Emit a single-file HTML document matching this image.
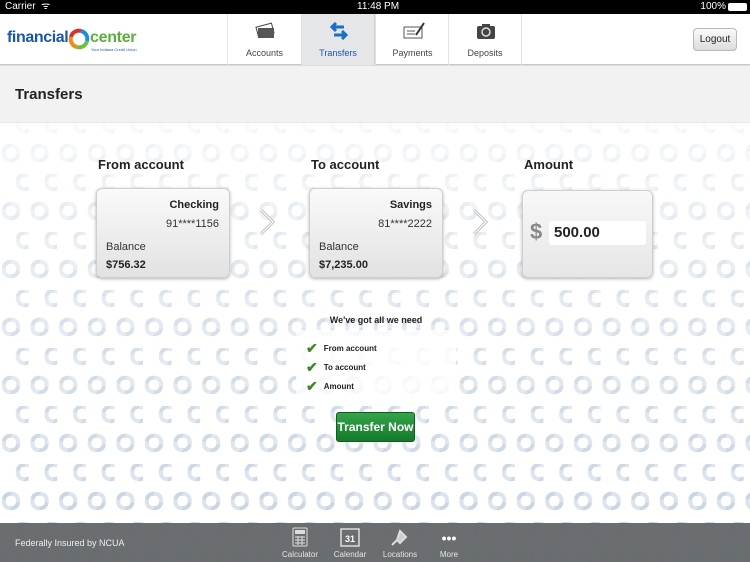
<!DOCTYPE html>
<html><head><meta charset="utf-8"><style>
*{margin:0;padding:0;box-sizing:border-box}
body{width:750px;height:562px;overflow:hidden;font-family:"Liberation Sans",sans-serif;position:relative;background:#fff}
.status{position:absolute;top:0;left:0;width:750px;height:14px;background:#000;color:#fff;font-size:10px;line-height:14px}
.header{position:absolute;top:14px;left:0;width:750px;height:51px;background:#fff;border-bottom:1px solid #c8c8c8;box-shadow:0 1px 2px rgba(0,0,0,.2)}
.tab{position:absolute;top:0;height:51px;width:74px;border-left:1px solid #e2e2e2;text-align:center;font-size:9px;color:#444}
.tab span{position:absolute;bottom:7px;left:0;right:0}
.tab svg{position:absolute;top:8px;left:26px}
.titlebar{position:absolute;top:66px;left:0;width:750px;height:57px;background:#f2f2f2;border-bottom:1px solid #e8e8e8}
.lbl{position:absolute;top:157px;font-size:13px;font-weight:bold;color:#222}
.card{position:absolute;top:188px;width:134px;height:90px;border-radius:6px;border:1px solid #cfcfcf;background:linear-gradient(#fafafa,#e2e2e2);box-shadow:0 1px 3px rgba(0,0,0,.3);overflow:hidden}
.card .a{position:absolute;right:10px;top:10px;font-size:11px;font-weight:bold;color:#222}
.card .n{position:absolute;right:10px;top:29px;font-size:11px;color:#333}
.card .b{position:absolute;left:9px;top:52px;font-size:11px;color:#333}
.card .v{position:absolute;left:9px;top:70px;font-size:11px;font-weight:bold;color:#222}
.footer{position:absolute;top:523px;left:0;width:750px;height:39px;background:rgba(100,104,107,.96);color:#eee}
.fi{position:absolute;top:0;width:50px;text-align:center;font-size:8px;color:#e6e6e6}
.fi span{position:absolute;top:27px;left:0;right:0}
</style></head><body>
<svg style="position:absolute;top:123px;left:0" width="750" height="439">
<defs>
<g id="sw">
<path d="M-9,-1 C-9,-7 -4,-10 2,-9 L1,-5 C-3,-6 -6,-3 -5,1 Z" fill="#c9d5e1"/>
<path d="M9,1 C9,7 4,10 -2,9 L-1,5 C3,6 6,3 5,-1 Z" fill="#c9d5e1"/>
<path d="M-1,9 C-7,9 -10,4 -9,-2 L-5,-1 C-6,3 -3,6 1,5 Z" fill="#dbe3eb"/>
<path d="M1,-9 C7,-9 10,-4 9,2 L5,1 C6,-3 3,-6 -1,-5 Z" fill="#dbe3eb"/>
</g>
<pattern id="p" width="28.6" height="58" patternUnits="userSpaceOnUse" x="0" y="-7">
<use href="#sw" x="25" y="8"/><use href="#sw" x="11" y="37"/>
</pattern>
<linearGradient id="fade" x1="0" y1="0" x2="0" y2="1"><stop offset="0" stop-color="#fff" stop-opacity=".8"/><stop offset=".4" stop-color="#fff" stop-opacity=".3"/><stop offset=".9" stop-color="#fff" stop-opacity="0"/></linearGradient>
</defs>
<rect width="750" height="439" fill="url(#p)"/>
<rect width="750" height="439" fill="url(#fade)"/>
</svg>
<div class="status"><span style="position:absolute;left:5px">Carrier ︎ ᯤ</span><span style="position:absolute;left:357px">11:48 PM</span><span style="position:absolute;right:24px">100%</span><span style="position:absolute;right:3px;top:3px;width:19px;height:8px;border:1px solid #fff;border-radius:2px;background:#fff"></span></div>
<div class="header">
<div style="position:absolute;left:7px;top:15px;font-size:16px;font-weight:bold;color:#1c56a6;letter-spacing:-.4px">financial</div>
<svg style="position:absolute;left:68px;top:13px" width="22" height="24" viewBox="-11 -12 22 24"><g fill="none" stroke-width="4"><path d="M-8,-2 A8,8 0 0 1 2,-8" stroke="#d8312a"/><path d="M2,-8 A8,8 0 0 1 8,2" stroke="#1c8fd6"/><path d="M8,2 A8,8 0 0 1 -2,8" stroke="#6cbf3f"/><path d="M-2,8 A8,8 0 0 1 -8,-2" stroke="#f08a1c"/></g></svg>
<div style="position:absolute;left:90px;top:15px;font-size:16px;font-weight:bold;color:#5aae3c;letter-spacing:-.3px">center</div>
<div style="position:absolute;left:91px;top:33px;font-size:4px;color:#1c56a6">Your Indiana Credit Union</div>
<div class="tab" style="left:227px"><svg width="22" height="18"><rect x="3" y="3" width="16" height="10" fill="#fff" stroke="#444" transform="rotate(-15 11 8)"/><rect x="4" y="6" width="16" height="10" fill="#555"/></svg><span>Accounts</span></div>
<div class="tab" style="left:301px;background:#e4e6e8;color:#1c56a6;border-right:1px solid #d0d0d0"><svg width="22" height="18"><path d="M4,5h12M8,1l-4,4 4,4M18,13H6M14,9l4,4-4,4" stroke="#1c6fc2" stroke-width="3" fill="none"/></svg><span>Transfers</span></div>
<div class="tab" style="left:375px"><svg width="24" height="18"><rect x="2" y="5" width="18" height="11" fill="#fff" stroke="#555"/><path d="M5,9h8M5,12h8" stroke="#555"/><path d="M14,13l8,-12" stroke="#333" stroke-width="2"/></svg><span>Payments</span></div>
<div class="tab" style="left:448px;border-right:1px solid #e2e2e2"><svg width="22" height="18"><rect x="2" y="4" width="18" height="13" rx="2" fill="#444"/><rect x="7" y="2" width="8" height="4" fill="#444"/><circle cx="11" cy="10" r="4" fill="none" stroke="#ddd" stroke-width="1.5"/></svg><span>Deposits</span></div>
<div style="position:absolute;left:693px;top:14px;width:44px;height:23px;border:1px solid #b8b8b8;border-radius:4px;background:linear-gradient(#fafafa,#dcdcdc);font-size:10px;line-height:21px;text-align:center;color:#222">Logout</div>
</div>
<div class="titlebar"><div style="position:absolute;left:15px;top:20px;font-size:15px;font-weight:bold;color:#222">Transfers</div></div>
<div class="lbl" style="left:98px">From account</div>
<div class="lbl" style="left:311px">To account</div>
<div class="lbl" style="left:524px">Amount</div>
<div class="card" style="left:96px"><div class="a">Checking</div><div class="n">91****1156</div><div class="b">Balance</div><div class="v">$756.32</div></div>
<div class="card" style="left:309px"><div class="a">Savings</div><div class="n">81****2222</div><div class="b">Balance</div><div class="v">$7,235.00</div></div>
<svg style="position:absolute;left:258px;top:208px" width="20" height="28"><path d="M3,2l12,12-12,12" fill="none" stroke="#bbb" stroke-width="3"/><path d="M3,2l12,12-12,12" fill="none" stroke="#fff" stroke-width="1.2"/></svg>
<svg style="position:absolute;left:471px;top:208px" width="20" height="28"><path d="M3,2l12,12-12,12" fill="none" stroke="#bbb" stroke-width="3"/><path d="M3,2l12,12-12,12" fill="none" stroke="#fff" stroke-width="1.2"/></svg>
<div class="card" style="left:522px;top:190px;width:131px;height:88px;background:linear-gradient(#f8f8f8,#e6e6e6)">
<div style="position:absolute;left:7px;top:28px;font-size:22px;font-weight:bold;color:#888">$</div>
<div style="position:absolute;left:26px;top:30px;width:97px;height:24px;background:#fff;border-radius:3px;font-size:15px;font-weight:bold;color:#222;line-height:24px;padding-left:5px">500.00</div>
</div>
<div style="position:absolute;left:296px;top:330px;width:160px;height:75px;background:rgba(255,255,255,.8)"></div>
<div style="position:absolute;left:296px;top:315px;width:160px;text-align:center;font-size:9px;font-weight:bold;color:#222">We've got all we need</div>
<div style="position:absolute;left:306px;top:339px;font-size:8px;font-weight:bold;color:#222;line-height:18px">
<div><span style="color:#3d8a25;font-size:14px;vertical-align:-2px;margin-right:6px">✔</span>From account</div>
<div><span style="color:#3d8a25;font-size:14px;vertical-align:-2px;margin-right:6px">✔</span>To account</div>
<div><span style="color:#3d8a25;font-size:14px;vertical-align:-2px;margin-right:6px">✔</span>Amount</div>
</div>
<div style="position:absolute;left:336px;top:412px;width:79px;height:30px;border-radius:3px;background:linear-gradient(#34a44a,#137a2a);border:1px solid #0f5e20;color:#fff;font-size:12px;font-weight:bold;text-align:center;line-height:28px">Transfer Now</div>
<div class="footer">
<div style="position:absolute;left:15px;top:15px;font-size:9px">Federally Insured by NCUA</div>
<div class="fi" style="left:275px"><svg width="16" height="20" style="margin-top:4px"><rect x="1" y="1" width="14" height="18" rx="1" fill="none" stroke="#ddd"/><rect x="3" y="3" width="10" height="4" fill="#ddd"/><path d="M3,10h10M3,13h10M3,16h10M6,9v9M10,9v9" stroke="#ddd"/></svg><span>Calculator</span></div>
<div class="fi" style="left:325px"><svg width="20" height="20" style="margin-top:4px"><rect x="1" y="2" width="18" height="17" fill="none" stroke="#ddd" stroke-width="1.5"/><text x="10" y="15" fill="#fff" font-size="9" font-weight="bold" text-anchor="middle" font-family="Liberation Sans">31</text></svg><span>Calendar</span></div>
<div class="fi" style="left:375px"><svg width="20" height="20" style="margin-top:4px"><path d="M10,4l6,6-6,6-3,-3zM7,13l-5,5" stroke="#ddd" stroke-width="2" fill="#ccc"/></svg><span>Locations</span></div>
<div class="fi" style="left:424px"><div style="position:absolute;top:7px;left:0;right:0;font-size:14px;font-weight:bold;color:#fff">•••</div><span>More</span></div>
</div>
</body></html>
